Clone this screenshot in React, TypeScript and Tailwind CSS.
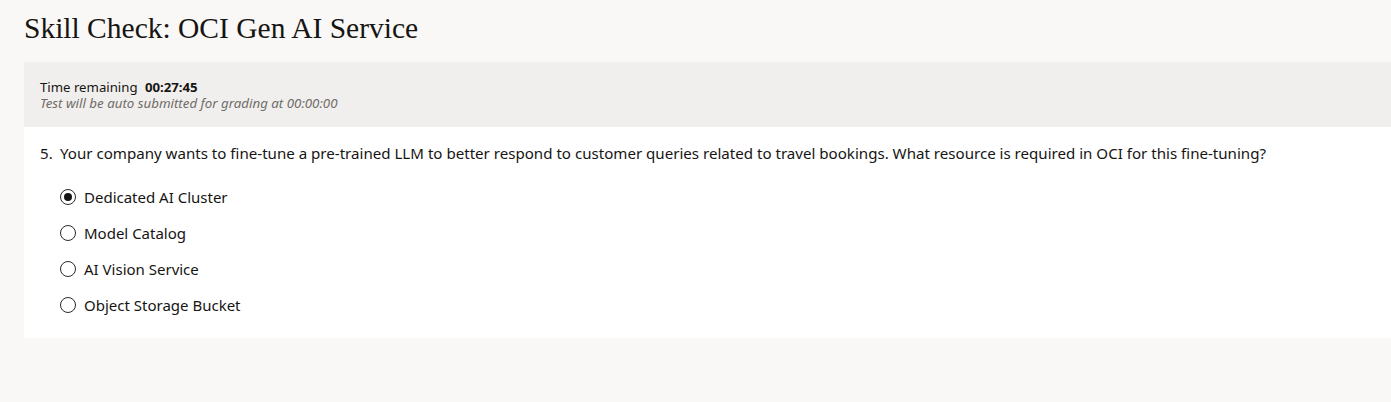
import React from "react";

const options = [
  { label: "Dedicated AI Cluster", checked: true },
  { label: "Model Catalog", checked: false },
  { label: "AI Vision Service", checked: false },
  { label: "Object Storage Bucket", checked: false },
];

export default function App() {
  return (
    <div className="min-h-[402px] w-full bg-[#f9f8f6] pl-6 text-[#161513]" style={{ fontFamily: '"Noto Sans", sans-serif' }}>
      <h1
        className="pt-[11px] pb-[17px] text-[29.5px] leading-[34px] text-[#161513]"
        style={{ fontFamily: '"Liberation Serif", serif' }}
      >
        Skill Check: OCI Gen AI Service
      </h1>
      <div className="bg-[#f1efed] px-4 pt-[17px] h-[65px]">
        <div className="text-[13.2px] leading-[16px]">
          Time remaining <span className="ml-1 font-bold">00:27:45</span>
        </div>
        <div className="text-[13.3px] leading-[16px] italic text-[#6f6c69]">
          Test will be auto submitted for grading at 00:00:00
        </div>
      </div>
      <div className="bg-white h-[211px] pl-4 pt-[16px]">
        <div className="flex text-[15.1px] leading-[20px]">
          <span className="w-[20px]">5.</span>
          <span>
            Your company wants to fine-tune a pre-trained LLM to better respond to customer queries related to travel bookings. What resource is required in OCI for this fine-tuning?
          </span>
        </div>
        <div className="mt-[24px] flex flex-col gap-[16px] pl-[20px]">
          {options.map((o) => (
            <label key={o.label} className="flex items-center gap-[8px] text-[15px] leading-[20px]">
              <span className="flex h-[16px] w-[16px] items-center justify-center rounded-full border-[1.5px] border-[#2b2a28]">
                {o.checked && <span className="h-[8px] w-[8px] rounded-full bg-[#161513]" />}
              </span>
              {o.label}
            </label>
          ))}
        </div>
      </div>
    </div>
  );
}
